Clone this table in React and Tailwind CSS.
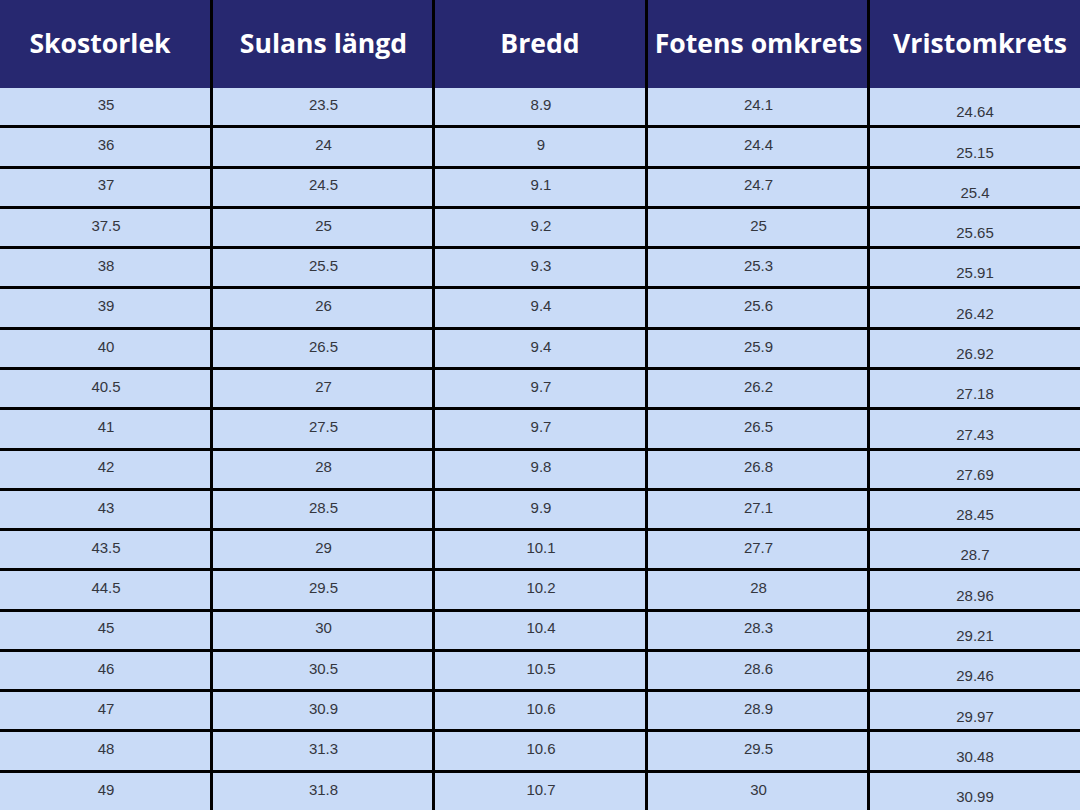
const headers = ['Skostorlek', 'Sulans längd', 'Bredd', 'Fotens omkrets', 'Vristomkrets'];

const rows = [
  ['35', '23.5', '8.9', '24.1', '24.64'],
  ['36', '24', '9', '24.4', '25.15'],
  ['37', '24.5', '9.1', '24.7', '25.4'],
  ['37.5', '25', '9.2', '25', '25.65'],
  ['38', '25.5', '9.3', '25.3', '25.91'],
  ['39', '26', '9.4', '25.6', '26.42'],
  ['40', '26.5', '9.4', '25.9', '26.92'],
  ['40.5', '27', '9.7', '26.2', '27.18'],
  ['41', '27.5', '9.7', '26.5', '27.43'],
  ['42', '28', '9.8', '26.8', '27.69'],
  ['43', '28.5', '9.9', '27.1', '28.45'],
  ['43.5', '29', '10.1', '27.7', '28.7'],
  ['44.5', '29.5', '10.2', '28', '28.96'],
  ['45', '30', '10.4', '28.3', '29.21'],
  ['46', '30.5', '10.5', '28.6', '29.46'],
  ['47', '30.9', '10.6', '28.9', '29.97'],
  ['48', '31.3', '10.6', '29.5', '30.48'],
  ['49', '31.8', '10.7', '30', '30.99'],
];

// small per-column nudges so header labels sit where the reference has them
const headerPad = ['pr-[10px]', 'pl-[2px]', 'pl-0', 'pl-[2px]', 'pl-[10px]'];

export default function App() {
  return (
    <div className="w-[1080px] h-[810px] flex flex-col bg-black overflow-hidden">
      {/* Header */}
      <div className="h-[88px] shrink-0 grid grid-cols-[210px_219px_210px_219px_210px] gap-x-[3px]">
        {headers.map((h, i) => (
          <div
            key={h}
            className={`bg-[#272870] flex items-center justify-center text-white font-bold text-[26.6px] font-['Open_Sans',sans-serif] whitespace-nowrap pb-[1px] ${headerPad[i]}`}
          >
            {h}
          </div>
        ))}
      </div>

      {/* Body */}
      <div className="flex-1 grid grid-cols-[210px_219px_210px_219px_210px] grid-rows-[repeat(18,minmax(0,1fr))] gap-[3px]">
        {rows.map((row, ri) =>
          row.map((cell, ci) => (
            <div
              key={`${ri}-${ci}`}
              className={
                ci === 4
                  ? 'bg-[#c9dbf7] flex items-center justify-center text-[15px] text-[#34363e] font-["Liberation_Sans",Arial,sans-serif] pt-[12px]'
                  : 'bg-[#c9dbf7] flex items-center justify-center text-[15px] text-[#34363e] font-["Liberation_Sans",Arial,sans-serif] pb-[3px] pl-[2px]'
              }
            >
              {cell}
            </div>
          ))
        )}
      </div>
    </div>
  );
}
